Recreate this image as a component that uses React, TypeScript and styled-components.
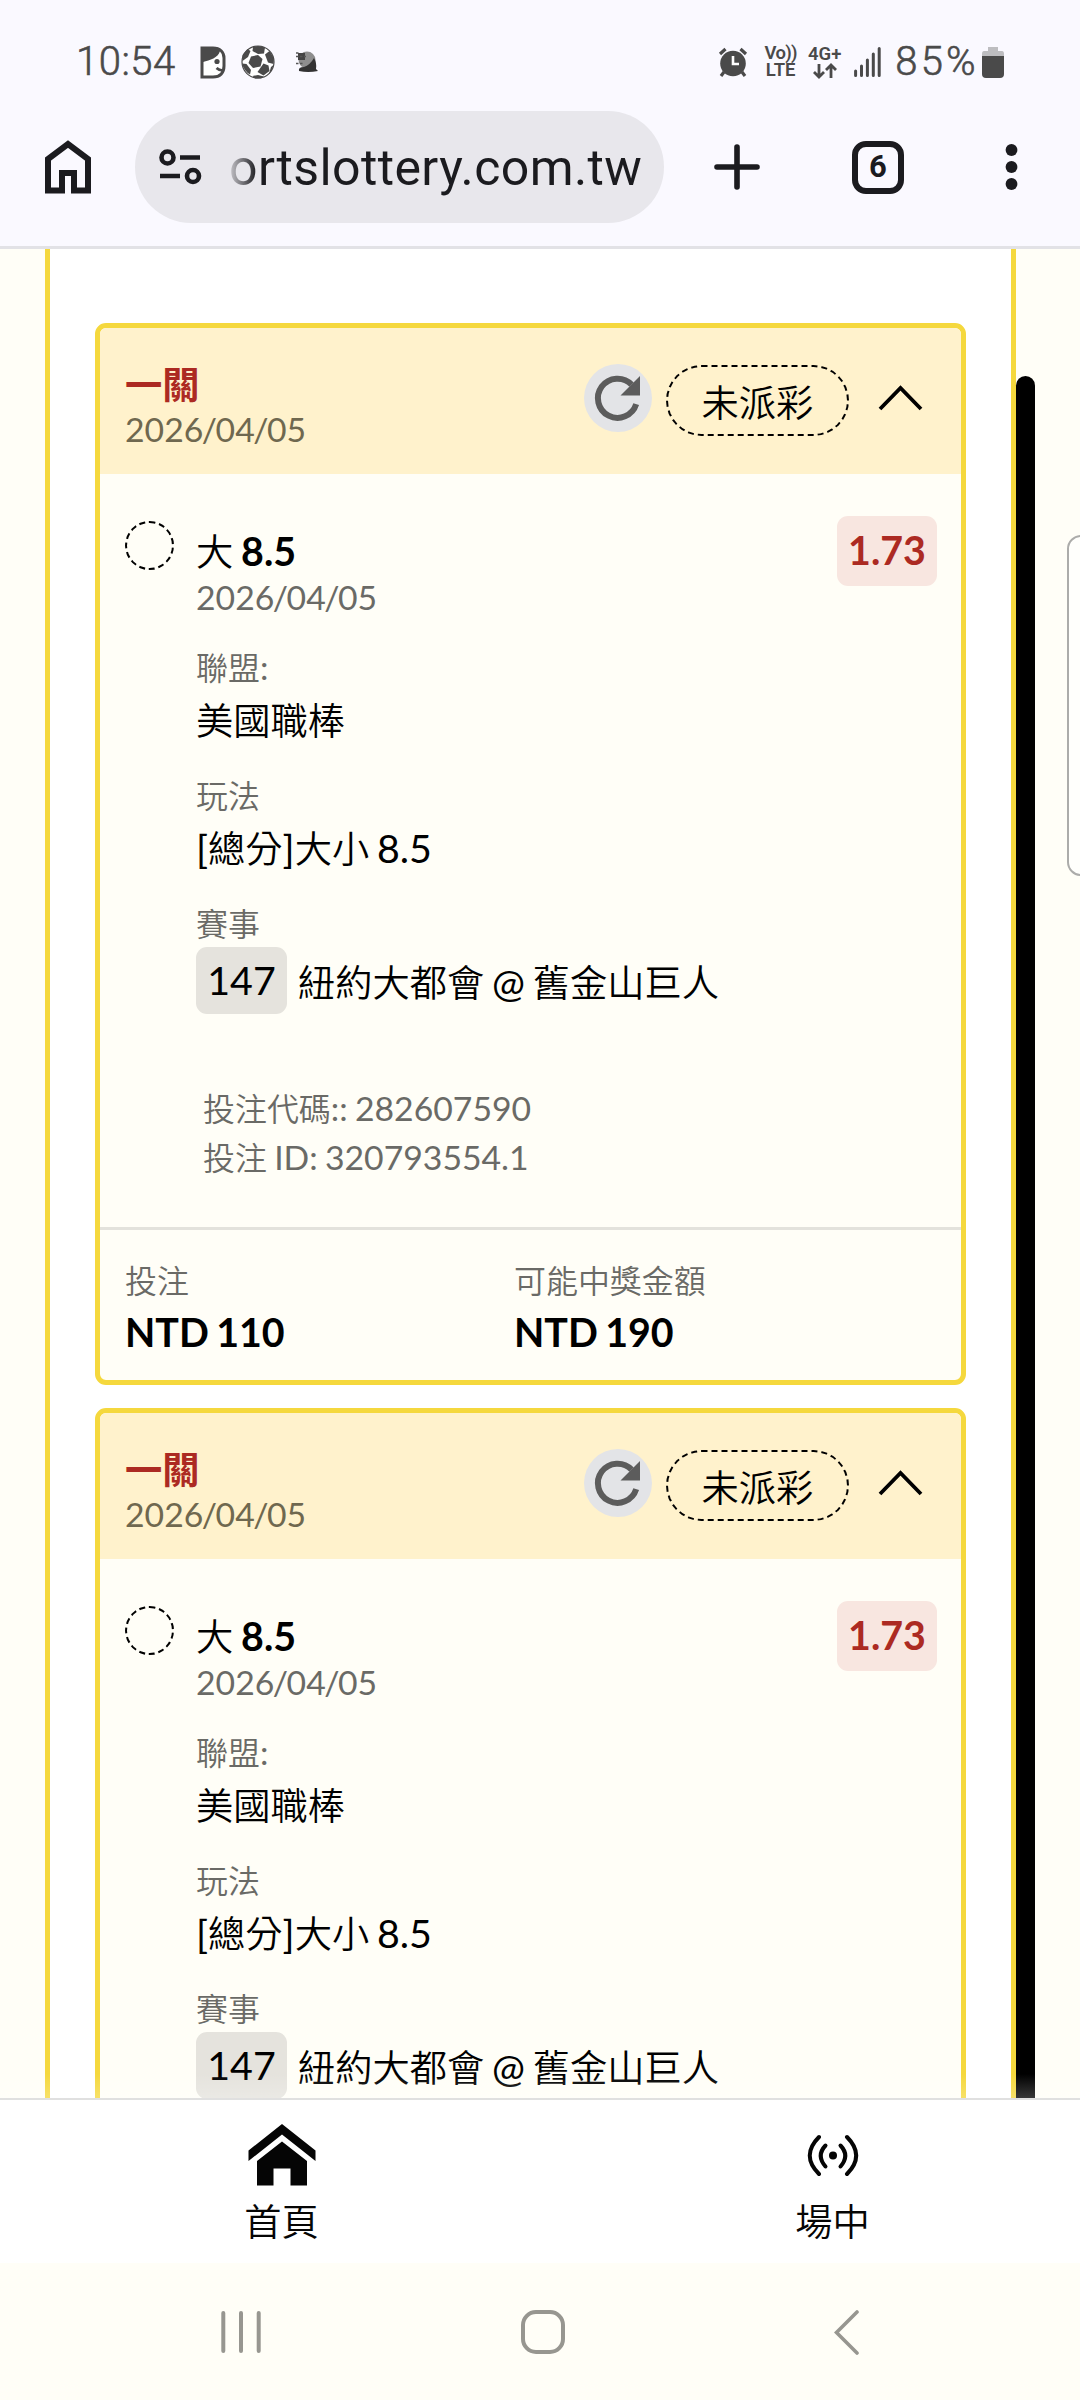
import React from 'react';
import styled, { createGlobalStyle } from 'styled-components';

const GlobalStyle = createGlobalStyle`
  * { box-sizing: border-box; }
  html, body { margin: 0; padding: 0; }
  body { width: 1080px; height: 2400px; overflow: hidden; background: #fffef7; }
`;

const Screen = styled.div`
  width: 1080px;
  height: 2400px;
  display: flex;
  flex-direction: column;
  overflow: hidden;
  background: #fffef7;
  color: #000;
  font-family: Lato, 'Noto Sans CJK TC', sans-serif;
`;

/* Browser chrome */
const StatusBar = styled.header`
  flex: none;
  height: 111px;
  padding: 13px 76px 0 76px;
  display: flex;
  align-items: center;
  justify-content: space-between;
  background: #faf9ff;
  color: #4a4a4a;
  font-family: Roboto, sans-serif;
`;
const StatusGroup = styled.div`
  display: flex;
  align-items: center;
`;
const StatusText = styled.span<{ $spacing: number; $ml?: number }>`
  margin-left: ${(p) => p.$ml ?? 0}px;
  font-size: 40px;
  font-weight: 300;
  line-height: 48px;
  letter-spacing: ${(p) => p.$spacing}px;
  -webkit-text-stroke: 0.6px #4a4a4a;
`;
const Glyph = styled.svg<{ $ml?: number }>`
  flex: none;
  display: block;
  margin-left: ${(p) => p.$ml ?? 0}px;
`;
const NetBadge = styled.div<{ $ml: number; $w: number }>`
  margin-left: ${(p) => p.$ml}px;
  width: ${(p) => p.$w}px;
  display: flex;
  flex-direction: column;
  align-items: center;
  font-size: 18.5px;
  font-weight: 600;
  line-height: 17px;
  white-space: nowrap;
`;
const Volte = styled.span`
  letter-spacing: -0.7px;
`;
const Toolbar = styled.div`
  flex: none;
  height: 138px;
  padding: 0 55px 23px 45px;
  display: flex;
  align-items: center;
  background: #faf9ff;
  border-bottom: 3px solid #e2e2e6;
`;
const UrlPill = styled.div`
  width: 529px;
  height: 112px;
  margin-left: 44px;
  padding-left: 24px;
  display: flex;
  align-items: center;
  border-radius: 56px;
  background: #e8e7ec;
`;
const Url = styled.span`
  margin-left: 27px;
  padding-top: 2px;
  font: 400 50px/64px Roboto, sans-serif;
  letter-spacing: 0.4px;
  white-space: nowrap;
  background: linear-gradient(90deg, #c9c8cd 0, #1b1b1f 28px);
  background-clip: text;
  -webkit-background-clip: text;
  color: transparent;
`;
const TabCount = styled.div`
  width: 52px;
  height: 53px;
  margin-left: 92px;
  display: flex;
  align-items: center;
  justify-content: center;
  border: 6px solid #1b1b1f;
  border-radius: 14px;
  color: #1b1b1f;
  font: 700 31px/36px Roboto, sans-serif;
`;

/* Page */
const Page = styled.main`
  position: relative;
  flex: 1;
  min-height: 0;
  display: flex;
  overflow: hidden;
`;
const Panel = styled.section`
  width: 971px;
  margin-left: 45px;
  padding: 74px 45px 0;
  display: flex;
  flex-direction: column;
  gap: 23px;
  border: solid #f5d83d;
  border-width: 0 5px;
  background: #fff;
`;
const ScrollThumb = styled.div`
  width: 19px;
  margin-top: 127px;
  border-radius: 10px 10px 0 0;
  background: #000;
`;
const EdgeHandle = styled.div`
  position: absolute;
  left: 1067px;
  top: 286px;
  width: 30px;
  height: 341px;
  border: 2px solid #acacaa;
  border-radius: 14px;
  background: #fffffc;
`;
const PageFade = styled.div`
  position: absolute;
  left: 0;
  right: 0;
  bottom: 0;
  height: 24px;
  background: linear-gradient(rgba(255, 255, 255, 0), rgba(255, 255, 255, 0.22));
`;
const Card = styled.article`
  flex: none;
  height: 1062px;
  display: flex;
  flex-direction: column;
  overflow: hidden;
  border: 5px solid #f5d83d;
  border-radius: 11px;
  background: #fffef7;
`;
const CardHead = styled.header`
  flex: none;
  height: 146px;
  padding: 33px 38px 0 25px;
  display: flex;
  background: #fff2cc;
`;
const HeadTitle = styled.div`
  flex: 1;
  display: flex;
  flex-direction: column;
  gap: 1px;
`;
const TypeName = styled.div`
  padding-top: 1px;
  font-size: 39.375px;
  line-height: 44px;
  font-weight: 700;
  color: #ac2a22;
`;
const Muted = styled.div<{ $warm?: boolean; $lh?: number }>`
  font-size: 33.75px;
  line-height: ${(p) => p.$lh ?? 44}px;
  color: ${(p) => (p.$warm ? '#6f684f' : '#6a6a66')};
  word-spacing: -1.4px;
  white-space: nowrap;
`;
const Slash = styled.span`
  margin: 0 -1.5px;
`;
const Value = styled.div<{ $bold?: boolean }>`
  font-size: 39.375px;
  line-height: 49px;
  font-weight: ${(p) => (p.$bold ? 700 : 400)};
  word-spacing: -2.3px;
  white-space: nowrap;
`;
const Han = styled.span<{ $bold?: boolean }>`
  font-family: 'Noto Sans CJK TC', sans-serif;
  font-size: 0.947em;
  font-weight: ${(p) => (p.$bold ? 700 : 350)};
  line-height: 1;
`;
const RefreshButton = styled.button`
  width: 68px;
  height: 68px;
  margin-top: 3px;
  padding: 0;
  display: flex;
  align-items: center;
  justify-content: center;
  border: 0;
  border-radius: 50%;
  background: #e3e4e7;
`;
const StatusPill = styled.div`
  width: 183px;
  height: 71px;
  margin: 4px 29px 0 14px;
  padding-top: 2px;
  display: flex;
  align-items: center;
  justify-content: center;
  border: 2px dashed #000;
  border-radius: 36px;
  font-size: 39.375px;
  line-height: 48px;
`;
const Chevron = styled.svg`
  display: block;
  margin-top: 24px;
`;
const CardBody = styled.div`
  flex: none;
  height: 753px;
  padding: 47px 24px 0 25px;
  display: flex;
  align-items: flex-start;
`;
const ResultDot = styled.div`
  width: 49px;
  height: 49px;
  border: 2px dashed #000;
  border-radius: 50%;
`;
const BodyCol = styled.div`
  flex: 1;
  margin-left: 22px;
  padding-top: 4.5px;
`;
const Odds = styled.div`
  width: 100px;
  height: 70px;
  margin-top: -5px;
  border-radius: 11px;
  background: #f8e6e0;
  color: #ac2a22;
  font-size: 39.375px;
  font-weight: 700;
  line-height: 68px;
  text-align: center;
`;
const Fields = styled.div`
  margin-top: 26px;
  display: flex;
  flex-direction: column;
  gap: 29px;
`;
const Field = styled.div<{ $gap: number }>`
  display: flex;
  flex-direction: column;
  gap: ${(p) => p.$gap}px;
`;
const MatchRow = styled.div`
  display: flex;
  align-items: center;
  gap: 11px;
`;
const MatchNo = styled.span`
  width: 91px;
  height: 67px;
  border-radius: 11px;
  background: #e5e3dd;
  font-size: 39.375px;
  line-height: 66px;
  text-align: center;
`;
const MatchName = styled(Value)`
  padding-top: 3px;
`;
const Codes = styled.div`
  margin: 70px 0 0 7px;
`;
const CardFoot = styled.footer`
  flex: 1;
  padding: 28px 25px 0;
  display: grid;
  grid-template-columns: 389px 1fr;
  align-items: start;
  border-top: 3px solid #e3e2dc;
`;

/* Bottom navigation */
const BottomNav = styled.nav`
  flex: none;
  height: 165px;
  padding: 23px 0 0 6px;
  display: grid;
  grid-template-columns: 551px 551px;
  overflow: hidden;
  border-top: 2px solid #e0e0e0;
  background: #fff;
`;
const NavItem = styled.a`
  display: flex;
  flex-direction: column;
  align-items: center;
  gap: 6px;
  font-size: 39.375px;
  line-height: 56px;
  color: #050505;
`;
const SystemBar = styled.div`
  flex: none;
  height: 137px;
  padding: 47px 0 0 221px;
  display: grid;
  grid-template-columns: 300px 313px 1fr;
`;

const Mixed = ({ children, bold }: { children: string; bold?: boolean }) => (
  <>
    {children
      .split(/([\u3400-\u9fff]+)/)
      .map((part, i) => (i % 2 ? <Han key={i} $bold={bold}>{part}</Han> : part))}
  </>
);

const DateText = ({ value }: { value: string }) => (
  <>
    {value.split('/').map((part, i) => (
      <React.Fragment key={i}>
        {i > 0 && <Slash>/</Slash>}
        {part}
      </React.Fragment>
    ))}
  </>
);

type Bet = {
  type: string;
  date: string;
  status: string;
  pick: [string, string];
  odds: string;
  league: string;
  play: string;
  matchNo: string;
  match: string;
  code: string;
  id: string;
  stake: string;
  payout: string;
};

const bet: Bet = {
  type: '一關',
  date: '2026/04/05',
  status: '未派彩',
  pick: ['大', '8.5'],
  odds: '1.73',
  league: '美國職棒',
  play: '[總分]大小 8.5',
  matchNo: '147',
  match: '紐約大都會 @ 舊金山巨人',
  code: '282607590',
  id: '320793554.1',
  stake: 'NTD 110',
  payout: 'NTD 190',
};

const BetCard = ({ data }: { data: Bet }) => (
  <Card>
    <CardHead>
      <HeadTitle>
        <TypeName><Mixed bold>{data.type}</Mixed></TypeName>
        <Muted $warm><DateText value={data.date} /></Muted>
      </HeadTitle>
      <RefreshButton aria-label="refresh">
        <svg width="68" height="68" viewBox="0 0 68 68">
          <path d="M52.2 40.2A19.6 19.6 0 1 1 47.6 20.6" fill="none" stroke="#5c5c5c" strokeWidth="6" />
          <path d="M56 12V31.500H36.500Z" fill="#5c5c5c" />
        </svg>
      </RefreshButton>
      <StatusPill>
        <span><Mixed>{data.status}</Mixed></span>
      </StatusPill>
      <Chevron width="45" height="26" viewBox="0 0 45 26">
        <path d="M2 24L22.500 3L43 24" fill="none" stroke="#000" strokeWidth="3.800" />
      </Chevron>
    </CardHead>
    <CardBody>
      <ResultDot />
      <BodyCol>
        <Value><Mixed>{data.pick[0]}</Mixed> <b>{data.pick[1]}</b></Value>
        <Muted><DateText value={data.date} /></Muted>
        <Fields>
          <Field $gap={6}>
            <Muted><Mixed>聯盟:</Mixed></Muted>
            <Value><Mixed>{data.league}</Mixed></Value>
          </Field>
          <Field $gap={6}>
            <Muted><Mixed>玩法</Mixed></Muted>
            <Value><Mixed>{data.play}</Mixed></Value>
          </Field>
          <Field $gap={2}>
            <Muted><Mixed>賽事</Mixed></Muted>
            <MatchRow>
              <MatchNo>{data.matchNo}</MatchNo>
              <MatchName><Mixed>{data.match}</Mixed></MatchName>
            </MatchRow>
          </Field>
        </Fields>
        <Codes>
          <Muted $lh={49}><Mixed>{`投注代碼:: ${data.code}`}</Mixed></Muted>
          <Muted $lh={49}><Mixed>{`投注 ID: ${data.id}`}</Mixed></Muted>
        </Codes>
      </BodyCol>
      <Odds>{data.odds}</Odds>
    </CardBody>
    <CardFoot>
      <Field $gap={5}>
        <Muted><Mixed>投注</Mixed></Muted>
        <Value $bold>{data.stake}</Value>
      </Field>
      <Field $gap={5}>
        <Muted><Mixed>可能中獎金額</Mixed></Muted>
        <Value $bold>{data.payout}</Value>
      </Field>
    </CardFoot>
  </Card>
);

const INK = '#1b1b1f';
const GREY = '#4a4a4a';

export default function App() {
  return (
    <Screen>
      <GlobalStyle />
      <StatusBar>
        <StatusGroup>
          <StatusText $spacing={0.5}>10:54</StatusText>
          <Glyph $ml={24} width="26" height="33" viewBox="0 0 26 33">
            <path d="M2 2H13C20 2 24 6 24 12V20C24 27 20 31 13 31H2Z" fill="#fff" stroke={GREY} strokeWidth="3" />
            <path d="M1 1H14C18 1 20 3 20 5C18 12 10 14 3 16H1Z" fill={GREY} />
            <circle cx="17" cy="15.500" r="2.600" fill={GREY} />
            <path d="M16.500 22Q19 24.500 23 24.500" fill="none" stroke={GREY} strokeWidth="2.600" />
          </Glyph>
          <Glyph $ml={15} width="34" height="34" viewBox="0 0 34 34">
            <circle cx="17" cy="17" r="16" fill="#fff" stroke={GREY} strokeWidth="1.200" />
            <g fill={GREY}>
              <path d="M10 11.500L17 10L21.500 14L19.500 21.500L12 23L7.500 18Z" />
              <path d="M12 2Q17 0 24 2.500L23 8.500L17 9L11.500 6Z" />
              <path d="M24 9.500L28.500 6L33 13L32.500 19L27 17.500Z" />
              <path d="M22.500 18.500L27.500 20.500L28.500 26L22.500 30.500L16.500 27Z" />
              <path d="M1.500 10L6.500 4L9.500 6L7 12L1.500 16Z" />
              <path d="M1 18.500L5.500 19L10 25L9 29.500Q3 26 1 18.500Z" />
              <path d="M11.500 31L17 30L23 31.500L20 33.500H14Z" />
              <path d="M30 22L32.500 20Q31 26 28 29Z" />
            </g>
          </Glyph>
          <Glyph $ml={21} width="22" height="22" viewBox="0 0 22 22">
            <circle cx="11" cy="9" r="8.500" fill="#8e8e8e" />
            <path d="M2 2H9V9H2Z" fill="#444" />
            <path d="M0 12.500H8M0 2H3M0 5.500H10" stroke="#555" strokeWidth="1.500" strokeDasharray="2.500 1.500" />
            <path d="M3 20Q2 16 8 16Q14 14 18 7Q21 12 20 18L22 20Q12 22 3 20Z" fill="#333" />
          </Glyph>
        </StatusGroup>
        <StatusGroup>
          <Glyph width="30" height="32" viewBox="0 0 30 32">
            <circle cx="15" cy="17.500" r="12.800" fill={GREY} />
            <path d="M2 8L7.500 3M28 8L22.500 3M6 26L3 30M24 26L27 30" stroke={GREY} strokeWidth="3.200" />
            <path d="M15 10V18H21" fill="none" stroke="#fff" strokeWidth="2.600" />
          </Glyph>
          <NetBadge $ml={17} $w={31}>
            <Volte>Vo))</Volte>
            <span>LTE</span>
          </NetBadge>
          <NetBadge $ml={12} $w={33}>
            <span>4G+</span>
            <svg width="24" height="16" viewBox="0 0 24 16">
              <path d="M6 1V14M1 9L6 14L11 9M18 15V2M13 7L18 2L23 7" fill="none" stroke={GREY} strokeWidth="2.800" />
            </svg>
          </NetBadge>
          <Glyph $ml={13} width="27" height="30" viewBox="0 0 27 30">
            <path d="M1.600 24V28.500M7.500 19V28.500M13.400 13V28.500M19.300 7V28.500M25.200 1.500V28.500" stroke={GREY} strokeWidth="3" strokeLinecap="round" />
          </Glyph>
          <StatusText $ml={14} $spacing={3.3}>85%</StatusText>
          <Glyph $ml={3} width="22" height="32" viewBox="0 0 22 32">
            <path d="M6 1H16V5H20Q22 5 22 8V10H0V8Q0 5 2 5H6Z" fill="#bdbdc0" />
            <path d="M0 10H22V28Q22 32 18 32H4Q0 32 0 28Z" fill={GREY} />
          </Glyph>
        </StatusGroup>
      </StatusBar>
      <Toolbar>
        <Glyph width="46" height="54" viewBox="0 0 46 54">
          <path d="M3 50.500V19L23 4L43 19V50.500H29V33H17V50.500Z" fill="none" stroke={INK} strokeWidth="6" />
        </Glyph>
        <UrlPill>
          <Glyph width="43" height="38" viewBox="0 0 43 38">
            <g fill="none" stroke={INK} strokeWidth="4.600">
              <circle cx="8.500" cy="9.500" r="6" />
              <circle cx="34" cy="28" r="6" />
              <path d="M21 9.500H41M1 28H21" />
            </g>
          </Glyph>
          <Url>ortslottery.com.tw</Url>
        </UrlPill>
        <Glyph $ml={50} width="46" height="46" viewBox="0 0 46 46">
          <path d="M23 3V43M3 23H43" stroke={INK} strokeWidth="5.600" strokeLinecap="round" />
        </Glyph>
        <TabCount>6</TabCount>
        <Glyph $ml={101} width="13" height="48" viewBox="0 0 13 48">
          <circle cx="6.500" cy="7" r="5.900" fill={INK} />
          <circle cx="6.500" cy="24" r="5.900" fill={INK} />
          <circle cx="6.500" cy="41" r="5.900" fill={INK} />
        </Glyph>
      </Toolbar>
      <Page>
        <Panel>
          <BetCard data={bet} />
          <BetCard data={bet} />
        </Panel>
        <ScrollThumb />
        <EdgeHandle />
        <PageFade />
      </Page>
      <BottomNav>
        <NavItem>
          <svg width="68" height="64" viewBox="0 0 68 64">
            <path d="M0.500 27.500L34 1L67.500 27.500V38L34 11.500L0.500 38Z" fill="#050505" />
            <path d="M34 18.500L59 38V62.500H42.500V45.500H25.500V62.500H9V38Z" fill="#050505" />
          </svg>
          <span><Mixed>首頁</Mixed></span>
        </NavItem>
        <NavItem>
          <svg width="52" height="64" viewBox="0 0 52 64">
            <circle cx="26" cy="32.500" r="4" fill="#050505" />
            <g fill="none" stroke="#050505" strokeWidth="4" strokeLinecap="round">
              <path d="M18.500 22.500Q9 32.500 18.500 43.500M33.500 22.500Q43 32.500 33.500 43.500" />
              <path d="M12 14Q-6.500 32.500 12 51M40 14Q58.500 32.500 40 51" />
            </g>
          </svg>
          <span><Mixed>場中</Mixed></span>
        </NavItem>
      </BottomNav>
      <SystemBar>
        <svg width="40" height="44" viewBox="0 0 40 44">
          <path d="M2.300 3V41M20 3V41M37.700 3V41" stroke="#979690" strokeWidth="4" strokeLinecap="round" />
        </svg>
        <svg width="44" height="44" viewBox="0 0 44 44">
          <rect x="2" y="2" width="40" height="40" rx="13" fill="none" stroke="#979690" strokeWidth="4" />
        </svg>
        <svg width="25" height="46" viewBox="0 0 25 46">
          <path d="M23 2L2.500 22.500L23 43" fill="none" stroke="#979690" strokeWidth="3.600" strokeLinecap="round" />
        </svg>
      </SystemBar>
    </Screen>
  );
}
